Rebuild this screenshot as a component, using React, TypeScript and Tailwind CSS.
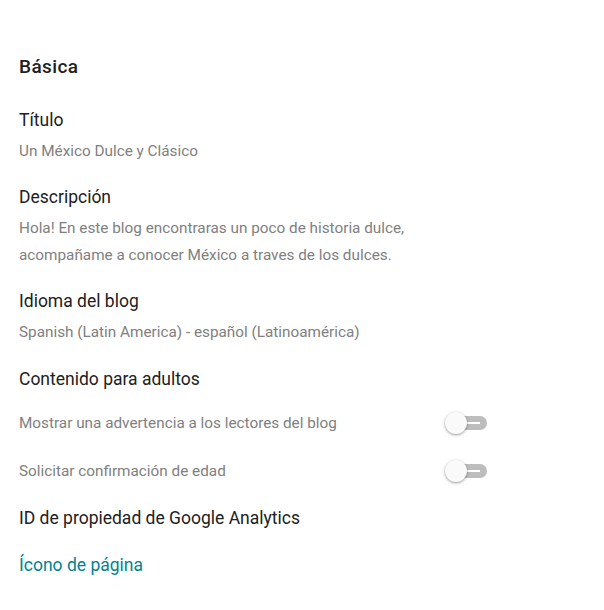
import React from "react";

function Toggle() {
  return (
    <div className="relative w-[42px] h-[24px] flex items-center">
      <div className="absolute left-[4px] right-0 top-[5px] h-[14px] rounded-full bg-[#bdbdbd]">
        <div className="absolute left-[14px] top-[6px] w-[17px] h-[2px] bg-white" />
      </div>
      <div className="absolute left-0 top-[1px] w-[22px] h-[22px] rounded-full bg-[#fafafa] shadow-[0_1px_3px_rgba(0,0,0,0.4)]" />
    </div>
  );
}

export default function App() {
  return (
    <div className="w-[604px] h-[610px] bg-white pl-[19px] pt-[55px]" style={{ fontFamily: "Roboto, sans-serif" }}>
      <div className="text-[19px] font-medium text-[#212121] leading-[24px] tracking-[0.4px]">Básica</div>
      <div className="mt-[30px] text-[17.5px] text-[#212121] leading-[22px]">Título</div>
      <div className="mt-[10px] text-[15.3px] text-[#808080] leading-[20px]">Un México Dulce y Clásico</div>
      <div className="mt-[25px] text-[17.5px] text-[#212121] leading-[22px]">Descripción</div>
      <div className="mt-[7px] text-[15.3px] text-[#808080] leading-[27px]">
        Hola! En este blog encontraras un poco de historia dulce,
        <br />
        acompañame a conocer México a traves de los dulces.
      </div>
      <div className="mt-[21px] text-[17.5px] text-[#212121] leading-[22px]">Idioma del blog</div>
      <div className="mt-[10px] text-[15.3px] text-[#808080] leading-[20px]">Spanish (Latin America) - español (Latinoamérica)</div>
      <div className="mt-[26px] text-[17.5px] text-[#212121] leading-[22px]">Contenido para adultos</div>
      <div className="mt-[11px] w-[468px] flex items-center justify-between h-[44px]">
        <span className="text-[15.3px] text-[#808080]">Mostrar una advertencia a los lectores del blog</span>
        <Toggle />
      </div>
      <div className="mt-[4px] w-[468px] flex items-center justify-between h-[44px]">
        <span className="text-[15.3px] text-[#808080]">Solicitar confirmación de edad</span>
        <Toggle />
      </div>
      <div className="mt-[14px] text-[17.5px] text-[#212121] leading-[22px]">ID de propiedad de Google Analytics</div>
      <div className="mt-[25px] text-[17.5px] text-[#00838f] leading-[22px]">Ícono de página</div>
    </div>
  );
}
